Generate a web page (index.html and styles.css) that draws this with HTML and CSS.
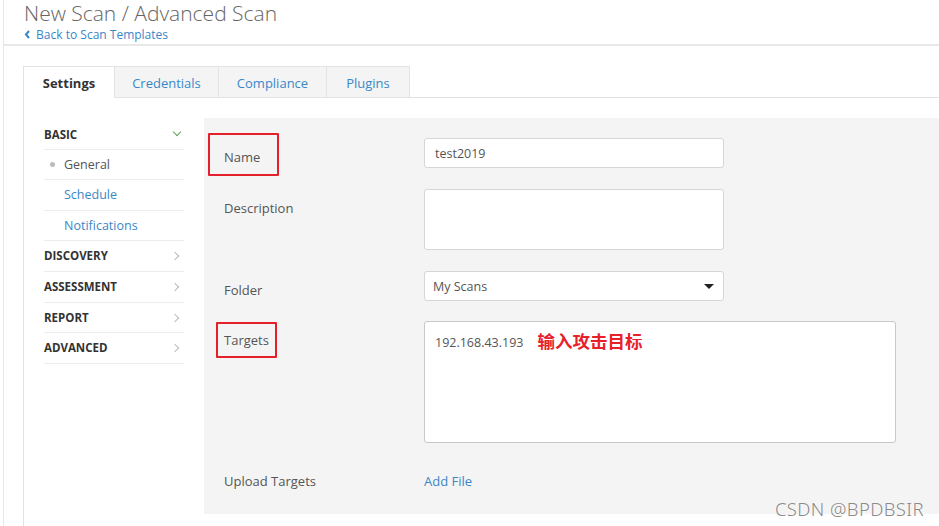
FILE: index.html
```html
<!DOCTYPE html>
<html lang="en">
<head>
    <meta charset="UTF-8">
    <meta name="viewport" content="width=device-width, initial-scale=1.0">
    <title>New Scan / Advanced Scan</title>
    <link rel="stylesheet" href="styles.css">
</head>
<body>
    <div class="page">
        <div class="header">
            <h1>New Scan / Advanced Scan</h1>
            <a class="back" href="#">
                <svg width="7" height="9" viewBox="0 0 7 9"><path d="M5 1 L2 4.5 L5 8" fill="none" stroke="#3a87c8" stroke-width="2"/></svg>
                Back to Scan Templates
            </a>
        </div>

        <div class="editor">
            <div class="tabs">
                <div class="tab active">Settings</div>
                <div class="tab">Credentials</div>
                <div class="tab">Compliance</div>
                <div class="tab">Plugins</div>
            </div>

            <div class="content">
                <ul class="sidebar">
                    <li class="section open">BASIC <span class="chev down"></span></li>
                    <li class="item current"><span class="dot"></span>General</li>
                    <li class="item">Schedule</li>
                    <li class="item">Notifications</li>
                    <li class="section">DISCOVERY <span class="chev"></span></li>
                    <li class="section">ASSESSMENT <span class="chev"></span></li>
                    <li class="section">REPORT <span class="chev"></span></li>
                    <li class="section">ADVANCED <span class="chev"></span></li>
                </ul>

                <div class="panel">
                    <div class="form-row">
                        <div class="label">Name<span class="mark mark-name"></span></div>
                        <div class="field"><div class="input">test2019</div></div>
                    </div>
                    <div class="form-row">
                        <div class="label">Description</div>
                        <div class="field"><div class="input area"></div></div>
                    </div>
                    <div class="form-row">
                        <div class="label">Folder</div>
                        <div class="field"><div class="input select">My Scans<span class="caret"></span></div></div>
                    </div>
                    <div class="form-row">
                        <div class="label">Targets<span class="mark mark-targets"></span></div>
                        <div class="field"><div class="input targets">192.168.43.193<span class="note">输入攻击目标</span></div></div>
                    </div>
                    <div class="form-row text-row">
                        <div class="label">Upload Targets</div>
                        <div class="field"><a href="#" class="link">Add File</a></div>
                    </div>
                    <div class="watermark">CSDN @BPDBSIR</div>
                </div>
            </div>
        </div>
    </div>
</body>
</html>
```

FILE: styles.css
```css
body {
    margin: 0;
    padding-left: 3px;
    font-family: "Open Sans", "Noto Sans", Arial, sans-serif;
    font-size: 12.5px;
    color: #555;
    background: #fff;
    overflow: hidden;
}
.page {
    border-left: 1px solid #e6e6e6;
    min-height: 526px;
}
.header {
    padding-left: 20px;
    height: 44px;
    border-bottom: 2px solid #e8e8e8;
}
.header h1 {
    margin: 0;
    font-size: 21px;
    font-weight: 300;
    line-height: 27px;
    color: #666;
}
.back {
    display: block;
    color: #3a87c8;
    text-decoration: none;
    line-height: 15px;
    font-size: 12px;
}
.back svg {
    margin-right: 2px;
}
.editor {
    margin-top: 20px;
    margin-left: 19px;
    border-left: 1px solid #e3e3e3;
    height: 460px;
}
.tabs {
    display: flex;
    height: 31px;
    border-bottom: 1px solid #e3e3e3;
}
.tab {
    width: 104px;
    line-height: 33px;
    text-align: center;
    color: #3a87c8;
    background: #f4f4f4;
    border-top: 1px solid #e3e3e3;
    border-right: 1px solid #e3e3e3;
    box-sizing: border-box;
    font-size: 13px;
}
.tab.active {
    width: 91px;
    background: #fff;
    color: #333;
    font-weight: bold;
    margin-bottom: -1px;
    height: 32px;
}
.tab:nth-child(3) {
    width: 108px;
}
.tab:nth-child(4) {
    width: 83px;
}
.content {
    display: flex;
}
.sidebar {
    list-style: none;
    margin: 21px 0 0 20px;
    padding: 0;
    width: 140px;
    flex: none;
}
.sidebar li {
    height: 29.6px;
    line-height: 29.6px;
    border-bottom: 1px solid #ececec;
    position: relative;
}
.section {
    font-weight: bold;
    font-size: 11.5px;
    color: #333;
}
.section.open {
    line-height: 32px;
}
.item {
    padding-left: 20px;
    color: #3a87c8;
    font-size: 12.5px;
}
.item.current {
    color: #555;
}
.dot {
    position: absolute;
    left: 6px;
    top: 12px;
    width: 5px;
    height: 5px;
    border-radius: 50%;
    background: #bbb;
}
.chev {
    position: absolute;
    right: 6px;
    top: 12px;
    width: 5px;
    height: 5px;
    border-top: 1.5px solid #bbb;
    border-right: 1.5px solid #bbb;
    transform: rotate(45deg);
}
.chev.down {
    top: 10px;
    right: 4px;
    border-color: #5aa55a;
    transform: rotate(135deg);
}
.panel {
    position: relative;
    flex: 1;
    margin: 20px 0 0 20px;
    padding: 20px 20px 24px 20px;
    background: #f4f4f4;
    height: 352px;
}
.form-row {
    display: flex;
    margin-bottom: 21px;
}
.form-row:nth-child(4) {
    margin-top: -1px;
    margin-bottom: 19px;
}
.label {
    position: relative;
    width: 200px;
    flex: none;
    padding-top: 9px;
    line-height: 20px;
    font-size: 13px;
}
.input {
    width: 300px;
    height: 30px;
    line-height: 30px;
    box-sizing: border-box;
    padding-left: 10px;
    background: #fff;
    border: 1px solid #d6d6d6;
    border-radius: 3px;
    color: #555;
    font-size: 12.5px;
}
.input.area {
    height: 61px;
}
.input.select {
    position: relative;
    padding-left: 8px;
}
.caret {
    position: absolute;
    right: 9px;
    top: 12px;
    border-left: 5px solid transparent;
    border-right: 5px solid transparent;
    border-top: 5px solid #222;
}
.input.targets {
    width: 472px;
    height: 122px;
    line-height: 20px;
    padding-top: 9px;
    border-color: #c8c8c8;
}
.note {
    margin-left: 14px;
    color: #e8202a;
    font-weight: bold;
    font-size: 17.5px;
    font-family: "Noto Sans CJK SC", sans-serif;
    vertical-align: -1px;
}
.text-row .field {
    padding-top: 9px;
    line-height: 20px;
}
.link {
    color: #3a87c8;
    text-decoration: none;
    font-size: 13px;
}
.mark {
    position: absolute;
    border: 2px solid #e3202c;
    border-radius: 1px;
    box-sizing: border-box;
}
.mark-name {
    left: -16px;
    top: -5px;
    width: 71px;
    height: 43px;
}
.mark-targets {
    left: -8px;
    top: 1px;
    width: 61px;
    height: 36px;
}
.watermark {
    position: absolute;
    right: 15px;
    bottom: -6px;
    font-family: "Noto Sans", sans-serif;
    font-weight: 300;
    font-size: 18.5px;
    line-height: 22px;
    color: #8a8a8a;
    text-shadow: 0 0 2px #fff;
    letter-spacing: 0.4px;
}
```
